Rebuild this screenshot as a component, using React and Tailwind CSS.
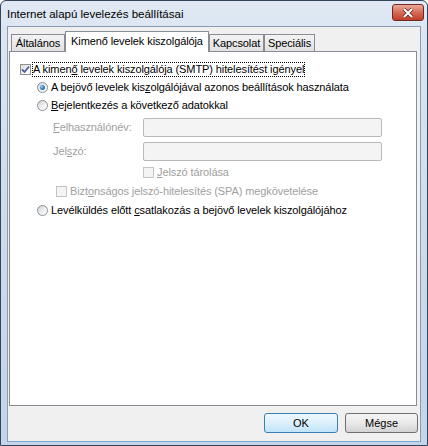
import React from 'react';

const font = "font-['Liberation_Sans',Arial,sans-serif]";

function Radio({ checked }) {
    return (
        <span className="w-[11px] h-[11px] shrink-0 rounded-full border border-[#8a8f96] bg-[linear-gradient(135deg,#cfd2d6,#f8f8f8_70%,#ffffff)] flex items-center justify-center">
            {checked && (
                <span className="w-[5px] h-[5px] rounded-full bg-[radial-gradient(circle_at_35%_35%,#8fd0f0,#2a7bbf_55%,#1a4f86)]" />
            )}
        </span>
    );
}

function Check({ checked, disabled }) {
    return (
        <span
            className={
                disabled
                    ? 'block w-[11px] h-[11px] shrink-0 border border-[#c4c4c4] bg-[#f4f4f4]'
                    : 'w-[11px] h-[11px] shrink-0 border border-[#8e8f8f] bg-[linear-gradient(135deg,#d9dbde,#f7f7f7_70%,#ffffff)] flex items-center justify-center'
            }
        >
            {checked && (
                <svg width="9" height="9" viewBox="0 0 9 9">
                    <path d="M1 4.5 L3.5 7 L8 1.5" fill="none" stroke="#4b62a0" strokeWidth="1.8" />
                </svg>
            )}
        </span>
    );
}

function Tab({ children, selected, w }) {
    if (selected) {
        return (
            <div className={`${w} h-[21px] bg-white border-l border-t border-r border-[#898c95] flex items-center justify-center pb-[1px] z-10`}>
                {children}
            </div>
        );
    }
    return (
        <div className={`${w} h-[18px] bg-gradient-to-b from-[#f3f3f3] to-[#e2e2e2] border border-[#898c95] flex items-center justify-center`}>
            {children}
        </div>
    );
}

export default function App() {
    return (
        <div className={`w-[428px] h-[446px] ${font} text-[11px] tracking-[-0.1px] text-black`}>
            <div className="w-[428px] h-[446px] flex flex-col rounded-t-[6px] border border-[#34465b] bg-gradient-to-b from-[#dfe8f3] via-[#cddbeb] to-[#c4d5e9]">
                {/* title bar */}
                <div className="h-[25px] flex items-start justify-between pl-[6px] pr-[3px]">
                    <span className="text-[11.5px] tracking-normal mt-[5px]">Internet alapú levelezés beállításai</span>
                    <div className="mt-[3px] w-[32px] h-[17px] rounded-[3px] border border-[#6e2a20] bg-gradient-to-b from-[#e9a99c] via-[#d66a55] to-[#c23d27] flex items-center justify-center">
                        <svg width="12" height="10" viewBox="0 0 12 10">
                            <path d="M2 1 L10 9 M10 1 L2 9" stroke="#5a2219" strokeWidth="3.4" />
                            <path d="M2 1 L10 9 M10 1 L2 9" stroke="#ffffff" strokeWidth="2" />
                        </svg>
                    </div>
                </div>

                {/* client area */}
                <div className="mx-[6px] h-[416px] border border-[#8a9cb2] border-b-[#7aa6d2] bg-[#f0f0f0] flex flex-col">
                    <div className="flex items-end ml-[3px] mt-[4px] h-[21px] -mb-[1px] relative z-10">
                        <Tab w="w-[54px]">Általános</Tab>
                        <Tab w="w-[144px]" selected>Kimenő levelek kiszolgálója</Tab>
                        <Tab w="w-[55px]">Kapcsolat</Tab>
                        <Tab w="w-[51px]">Speciális</Tab>
                    </div>

                    <div className="ml-[1px] w-[408px] h-[355px] border border-[#898c95] bg-white flex flex-col">
                        <div className="mt-[10px] h-[14px] flex items-center">
                            <span className="ml-[10px]"><Check checked /></span>
                            <span className="ml-[1px] h-[15px] border border-dotted border-[#000] flex items-center">
                                <span>A kimen<u>ő</u> levelek kiszolgálója (SMTP) hitelesítést igényel</span>
                            </span>
                        </div>
                        <div className="mt-[4px] h-[14px] flex items-center">
                            <span className="ml-[27px]"><Radio checked /></span>
                            <span className="ml-[3px]">A bejövő levelek kis<u>z</u>olgálójával azonos beállítások használata</span>
                        </div>
                        <div className="mt-[4px] h-[14px] flex items-center">
                            <span className="ml-[27px]"><Radio /></span>
                            <span className="ml-[3px]"><u>B</u>ejelentkezés a következő adatokkal</span>
                        </div>
                        <div className="mt-[6px] h-[19px] flex items-center">
                            <span className="ml-[43px] w-[90px] text-[#a0a0a0]"><u>F</u>elhasználónév:</span>
                            <span className="w-[239px] h-[19px] rounded-[2px] border border-[#b9b9b9] bg-[#f4f4f4]" />
                        </div>
                        <div className="mt-[5px] h-[19px] flex items-center">
                            <span className="ml-[43px] w-[90px] text-[#a0a0a0]">Jel<u>s</u>zó:</span>
                            <span className="w-[239px] h-[19px] rounded-[2px] border border-[#b9b9b9] bg-[#f4f4f4]" />
                        </div>
                        <div className="mt-[4px] h-[14px] flex items-center">
                            <span className="ml-[133px]"><Check disabled /></span>
                            <span className="ml-[3px] text-[#a0a0a0]"><u>J</u>elszó tárolása</span>
                        </div>
                        <div className="mt-[5px] h-[14px] flex items-center">
                            <span className="ml-[46px]"><Check disabled /></span>
                            <span className="ml-[3px] text-[#a0a0a0]">Bizt<u>o</u>nságos jelszó-hitelesítés (SPA) megkövetelése</span>
                        </div>
                        <div className="mt-[5px] h-[14px] flex items-center">
                            <span className="ml-[27px]"><Radio /></span>
                            <span className="ml-[3px]">Levélküldés előtt <u>c</u>satlakozás a bejövő levelek kiszolgálójához</span>
                        </div>
                    </div>

                    <div className="mt-[7px] flex justify-end gap-[7px] pr-[2px]">
                        <button className="w-[74px] h-[20px] rounded-[3px] border border-[#3c7fb1] bg-gradient-to-b from-[#eef8fd] via-[#dcf0fc] to-[#c0e4f8] tracking-normal">
                            OK
                        </button>
                        <button className="w-[73px] h-[20px] rounded-[3px] border border-[#707070] bg-gradient-to-b from-[#f4f4f4] via-[#e9e9e9] to-[#d3d3d3] tracking-normal">
                            Mégse
                        </button>
                    </div>
                </div>
            </div>
        </div>
    );
}
